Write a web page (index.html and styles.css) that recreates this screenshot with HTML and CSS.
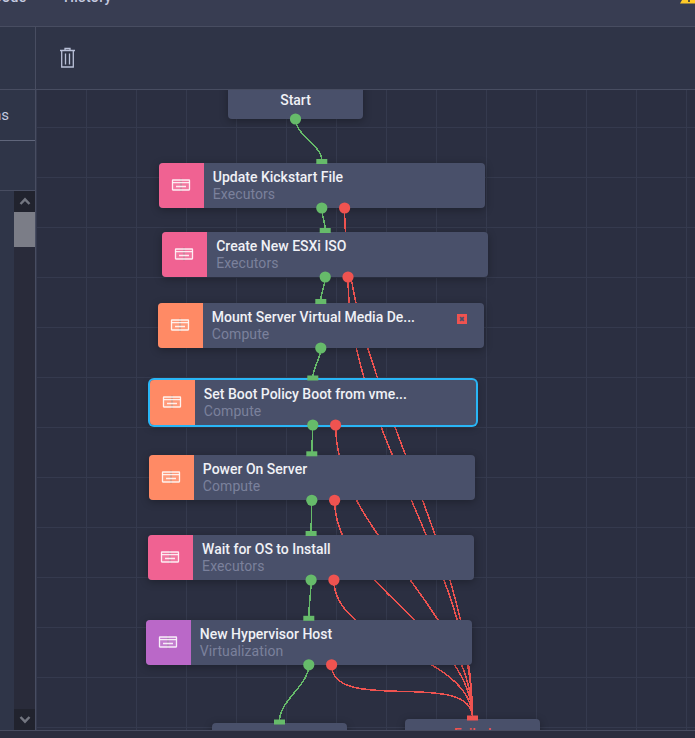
FILE: index.html
```html
<!DOCTYPE html>
<html lang="en">
<head>
<meta charset="utf-8">
<title>Workflow Designer</title>
<link rel="stylesheet" href="styles.css">
</head>
<body>
<svg class="defs" width="0" height="0" aria-hidden="true">
  <symbol id="card" viewBox="0 0 20 14">
    <path d="M10 .5v13" stroke="#777" stroke-opacity=".35" stroke-width="2"/>
    <rect class="card-fill" x="1.5" y="2" width="17" height="10"/>
    <rect x="1.5" y="2" width="17" height="10" rx=".4" fill="none" stroke="#fff" stroke-opacity=".88" stroke-width="1.3"/>
    <path d="M1.5 4.7h17M5 8.5h10" stroke="#fff" stroke-opacity=".85" stroke-width="1.3" fill="none"/>
  </symbol>
</svg>
<div class="app">
  <header class="tabs"><span class="tab tab-code">Code</span><span class="tab tab-history">History</span>
    <svg class="warning" width="18" height="16" viewBox="0 0 18 16"><path d="M9 0L18 15.5H0Z" fill="#ffca28"/><path d="M9 5v5M9 12v2" stroke="#5c5336" stroke-width="2"/></svg>
  </header>
  <div class="main">
    <aside class="side">
      <div class="side-tools"></div>
      <div class="side-title"><span>Actions</span></div>
      <div class="side-filter"></div>
      <div class="side-list">
        <div class="scroll">
          <div class="scroll-btn"><svg width="12" height="9" viewBox="0 0 12 9"><path d="M1.5 7L6 2.3 10.500 7"/></svg></div>
          <div class="thumb"></div>
          <div class="track"></div>
          <div class="scroll-btn"><svg width="12" height="9" viewBox="0 0 12 9"><path d="M1.500 2L6 6.700 10.500 2"/></svg></div>
        </div>
      </div>
    </aside>
    <section class="work">
      <div class="toolbar">
        <svg class="trash" width="15" height="22" viewBox="0 0 15 22"><path d="M0 3.500h15M5 3V1.500h5V3M1.700 4v16h11.600V4M5.500 6.500v11M9.500 6.500v11"/></svg>
      </div>
      <div class="canvas">
        <svg class="links" id="wires" width="659" height="640" viewBox="36 90 659 640"></svg>
        <div id="nodes"></div>
        <svg class="ports" id="ports" width="659" height="640" viewBox="36 90 659 640"></svg>
      </div>
    </section>
  </div>
  <footer class="foot"></footer>
</div>
<script src="flow.js"></script>
</body>
</html>
```
FILE: flow.js
```js
const origin = { x: 36, y: 90 };
const nodes = [
  { x: 159, y: 163, title: 'Update Kickstart File', group: 'Executors', kind: 'pink', error: true },
  { x: 162.4, y: 232, title: 'Create New ESXi ISO', group: 'Executors', kind: 'pink', error: true },
  { x: 158, y: 303, title: 'Mount Server Virtual Media De...', group: 'Compute', kind: 'orange', flag: true },
  { x: 150, y: 380, title: 'Set Boot Policy Boot from vme...', group: 'Compute', kind: 'orange', error: true, selected: true },
  { x: 149, y: 455.3, title: 'Power On Server', group: 'Compute', kind: 'orange', error: true },
  { x: 148.300, y: 535, title: 'Wait for OS to Install', group: 'Executors', kind: 'pink', error: true },
  { x: 146, y: 619.8, title: 'New Hypervisor Host', group: 'Virtualization', kind: 'purple', error: true }
];
const terminals = [
  { x: 228, y: 84, title: 'Start' },
  { x: 212, y: 723, title: '' },
  { x: 405, y: 719, title: 'Failed', kind: 'failed' }
];
const place = n => `left:${n.x - origin.x}px;top:${n.y - origin.y}px`;
document.getElementById('nodes').innerHTML =
  terminals.map(n => `<div class="node terminal ${n.kind || ''}" style="${place(n)}">${n.title}</div>`).join('') +
  nodes.map(n => `<div class="node ${n.selected ? 'selected' : ''}" style="${place(n)}">
    <div class="icon ${n.kind}"><svg width="20" height="14"><use href="#card"/></svg></div>
    <div class="label"><div class="title">${n.title}</div><div class="group">${n.group}</div></div>
    ${n.flag ? '<svg class="flag" width="10" height="10" viewBox="0 0 10 10"><rect width="10" height="10" fill="#ef5350"/><path d="M3.200 3.200l3.600 3.600M6.800 3.200L3.200 6.800" stroke="#49506a" stroke-width="1.7"/></svg>' : ''}
  </div>`).join('');

let wires = '', ports = '';
// Control points sit a third of the span away from each end.
function wire(x1, y1, x2, y2, cls) {
  const d = Math.hypot(x2 - x1, y2 - y1) / 3;
  wires += `<path class="${cls}" d="M${x1} ${y1}C${x1} ${y1 + d} ${x2} ${y2 - d} ${x2} ${y2}"/>`;
}
const dot = (x, y, cls) => { ports += `<circle class="${cls}" cx="${x}" cy="${y}" r="5.600"/>`; };
const plug = (x, y, cls) => { ports += `<rect class="${cls}" x="${x - 5.500}" y="${y - 3}" width="11" height="5"/>`; };

let from = { x: 295.500, y: 119 };
dot(from.x, from.y, 'ok');
nodes.forEach(n => {
  const cx = n.x + 162.8;
  wire(from.x, from.y, cx, n.y - 2, 'ok');
  plug(cx, n.y - (n.selected ? 1.500 : 1), 'ok');
  from = { x: cx, y: n.y + 45 };
  dot(cx, from.y, 'ok');
  if (n.error) {
    wire(cx + 22.800, from.y, 472.500, 718, 'bad');
    dot(cx + 22.800, from.y, 'bad');
  }
});
wire(from.x, from.y, 279.500, 721, 'ok');
plug(279.500, 722.500, 'ok');
plug(472.500, 718.500, 'bad');
document.getElementById('wires').innerHTML = wires;
document.getElementById('ports').innerHTML = ports;
```
FILE: styles.css
```css
* { box-sizing: border-box; }
body {
  margin: 0;
  font-family: Roboto, "Liberation Sans", sans-serif;
  color: #c5cae0;
  background: #2b2f41;
}
.defs { display: block; position: absolute; }
.app { display: flex; flex-direction: column; width: 695px; height: 738px; overflow: hidden; }
.tabs {
  display: flex;
  align-items: flex-start;
  flex: none;
  height: 27px;
  background: #383d52;
  border-bottom: 1px solid #484d61;
  overflow: hidden;
}
.tab { font-size: 14px; line-height: 16px; font-weight: 500; letter-spacing: .4px; margin-top: -11px; flex: none; }
.tab-code { margin-left: -7.5px; width: 71.5px; }
.warning { margin: -12px -3px 0 auto; flex: none; }
.main { display: flex; flex: 1; min-height: 0; }
.side {
  display: flex;
  flex-direction: column;
  flex: none;
  width: 36px;
  background: #2f3548;
  border-right: 1px solid #484d61;
}
.side-tools { height: 63px; border-bottom: 1px solid #484d61; flex: none; }
.side-title {
  display: flex;
  justify-content: flex-end;
  align-items: center;
  flex: none;
  height: 51px;
  padding-right: 26px;
  border-bottom: 1px solid #60667b;
  font-size: 15px;
  overflow: hidden;
}
.side-filter { flex: none; height: 50px; border-bottom: 1px solid #484d61; }
.side-list { display: flex; justify-content: flex-end; flex: 1; min-height: 0; }
.scroll { display: flex; flex-direction: column; width: 21px; }
.scroll-btn { display: flex; align-items: center; justify-content: center; height: 21px; flex: none; background: #21232e; }
.scroll-btn path { fill: none; stroke: #737680; stroke-width: 2.4; }
.thumb { height: 35px; flex: none; background: #7b7d87; }
.track { flex: 1; background: #292b3a; }
.work { display: flex; flex-direction: column; flex: 1; min-width: 0; }
.toolbar { flex: none; height: 63px; padding: 20px 24px; background: #2f3447; border-bottom: 1px solid #484d61; }
.trash { display: block; fill: none; stroke: #b9c0d8; stroke-width: 1.3; }
.canvas {
  position: relative;
  flex: 1;
  overflow: hidden;
  background-color: #2b2f41;
  background-image: linear-gradient(90deg, #353a4e 1px, transparent 1px), linear-gradient(#353a4e 1px, transparent 1px);
  background-size: 50px 50px;
  background-position: 0 37px;
}
.foot { flex: none; height: 8px; background: #2b2e3f; border-top: 1px solid #484d61; }
.links, .ports { position: absolute; left: 0; top: 0; }
.links path { fill: none; stroke-width: 1.5; shape-rendering: crispEdges; }
.links .ok { stroke: #66bb6a; }
.links .bad { stroke: #ef5350; }
.ports .ok { fill: #66bb6a; }
.ports .bad { fill: #ef5350; }
.node {
  position: absolute;
  display: flex;
  width: 326px;
  height: 45px;
  border-radius: 4px;
  background: #49506a;
  box-shadow: 0 2px 8px rgba(0, 0, 0, .3);
}
.selected { box-shadow: 0 0 0 2px #29b6f6, 0 2px 8px rgba(0, 0, 0, .3); }
.terminal {
  width: 135px;
  height: 35px;
  justify-content: center;
  font-size: 14px;
  font-weight: 500;
  line-height: 33px;
  color: #f0f1f6;
}
.failed { color: #ef5350; line-height: 31px; }
.icon {
  display: flex;
  align-items: center;
  justify-content: center;
  flex: none;
  width: 45px;
  border-radius: 4px 0 0 4px;
}
.icon svg { display: block; margin: -1px 1px 0 0; }
.card-fill { fill: #fff; fill-opacity: .14; }
.pink { background: #f06292; }
.orange { background: #ff8a65; }
.purple { background: #ba68c8; }
.label { flex: 1; padding: 5px 0 0 8.8px; font-size: 14px; white-space: nowrap; }
.title { font-weight: 500; line-height: 18px; color: #f0f1f6; }
.group { line-height: 17px; letter-spacing: .08px; color: #7b819c; }
.flag { flex: none; margin: 11px 17px 0 0; }
```
